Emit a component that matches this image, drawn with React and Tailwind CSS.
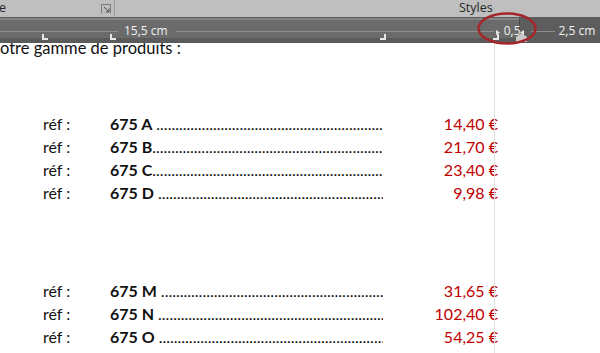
import React from "react";

const groupOne = [
  { ref: "675 A", gap: true, price: "14,40 €" },
  { ref: "675 B", gap: false, price: "21,70 €" },
  { ref: "675 C", gap: false, price: "23,40 €" },
  { ref: "675 D", gap: true, price: "9,98 €" },
];

const groupTwo = [
  { ref: "675 M", gap: true, price: "31,65 €" },
  { ref: "675 N", gap: true, price: "102,40 €" },
  { ref: "675 O", gap: true, price: "54,25 €" },
];

const dots = ".".repeat(120);

function Row({ item }) {
  return (
    <div className="flex h-[23px] items-center leading-[23px] whitespace-nowrap">
      <span className="w-[110px] pl-[43px]">réf :</span>
      <span className="flex w-[273px] overflow-hidden">
        <span className="font-bold">{item.ref}</span>
        {item.gap && <span className="w-[4px] shrink-0"></span>}
        <span className="overflow-hidden">{dots}</span>
      </span>
      <span className="w-[115px] text-right text-[#c00000]">{item.price}</span>
    </div>
  );
}

function Marker({ className, flip }) {
  return (
    <div className={`absolute h-[6px] w-[6px] ${className}`}>
      <div
        className={`absolute top-0 h-[6px] w-[2px] bg-[#e6e6e6] ${flip ? "right-0" : "left-0"}`}
      ></div>
      <div className="absolute bottom-0 left-0 h-[2px] w-[6px] bg-[#e6e6e6]"></div>
    </div>
  );
}

export default function App() {
  return (
    <div className="relative h-[353px] w-[600px] overflow-hidden bg-white font-['Lato',sans-serif]">
      {/* Ribbon */}
      <div className="flex h-[17px] bg-[#bfbfbf] font-['Open_Sans',sans-serif] text-[12.5px] leading-[15px] text-[#262626]">
        <div className="flex w-[115px] items-start justify-between border-r border-[#9c9c9c] pr-[3px]">
          <span className="-ml-[1px]">e</span>
          <svg className="mt-[4px]" width="10" height="10" viewBox="0 0 10 10">
            <path d="M0.5 9.5V0.5H9.5V9.5" fill="none" stroke="#7a7a7a" strokeWidth="1" />
            <path d="M3 3L8 8M8 4.5V8H4.5" fill="none" stroke="#4a4a4a" strokeWidth="1" />
          </svg>
        </div>
        <div className="pl-[344px]">Styles</div>
      </div>

      {/* Ruler */}
      <div className="relative z-10 h-[26px] border-t border-[#5c5c5c] bg-[#6b6b6b] font-['Open_Sans',sans-serif]">
        <div className="h-[2px] bg-[#858585]"></div>
        <div className="absolute bottom-0 left-0 h-[5px] w-full bg-[#5b5b5b]"></div>
        <div className="absolute left-[519px] top-0 h-[21px] w-[81px] border-l border-[#4a4a4a] bg-[#5d5d5d]"></div>

        {/* guide line with labels */}
        <div className="relative mt-[3px] flex h-[16px] items-center text-[12px] leading-[16px] text-[#f2f2f2]">
          <div className="h-[1px] w-[118px] bg-[#8e8e8e]"></div>
          <span className="ml-[6px]">15,5 cm</span>
          <div className="ml-[8px] h-[1px] w-[318px] bg-[#8e8e8e]"></div>
          <span className="ml-[10px]">0,5</span>
          <div className="ml-[10px] h-[1px] w-[24px] bg-[#8e8e8e]"></div>
          <span className="ml-[4px]">2,5 cm</span>
        </div>

        <Marker className="left-[42px] top-[16px]" />
        <Marker className="left-[110px] top-[16px]" />
        <Marker className="left-[380px] top-[16px]" flip />
        <Marker className="left-[493px] top-[16px]" flip />

        <svg className="absolute left-[496px] top-[12px]" width="5" height="5" viewBox="0 0 5 5">
          <path d="M0 0L4 2.5L0 5Z" fill="#e6e6e6" />
        </svg>
        <svg className="absolute left-[519px] top-[12px]" width="5" height="5" viewBox="0 0 5 5">
          <path d="M5 0L1 2.5L5 5Z" fill="#e6e6e6" />
        </svg>
        <svg className="absolute left-[516px] top-[15px]" width="11" height="9" viewBox="0 0 11 9">
          <path d="M5.5 0L11 4V9H0V4Z" fill="#c8c8c8" />
        </svg>
      </div>

      {/* Highlight circle */}
      <svg className="absolute left-[476px] top-[11px] z-20" width="62" height="35" viewBox="0 0 62 35">
        <ellipse cx="31" cy="17.5" rx="28.5" ry="15" fill="none" stroke="#a3262b" strokeWidth="2.5" />
      </svg>

      {/* Page */}
      <div className="relative text-[16px] text-[#111111]">
        <div className="absolute left-[494px] top-0 h-[320px] w-[1px] bg-[#dedede]"></div>
        <p className="-mt-[6px] h-[23px] text-[16.5px] leading-[23px]">otre gamme de produits :</p>

        <div className="mt-[52px]">
          {groupOne.map((item) => (
            <Row key={item.ref} item={item} />
          ))}
        </div>

        <div className="mt-[75px]">
          {groupTwo.map((item) => (
            <Row key={item.ref} item={item} />
          ))}
        </div>
      </div>
    </div>
  );
}
